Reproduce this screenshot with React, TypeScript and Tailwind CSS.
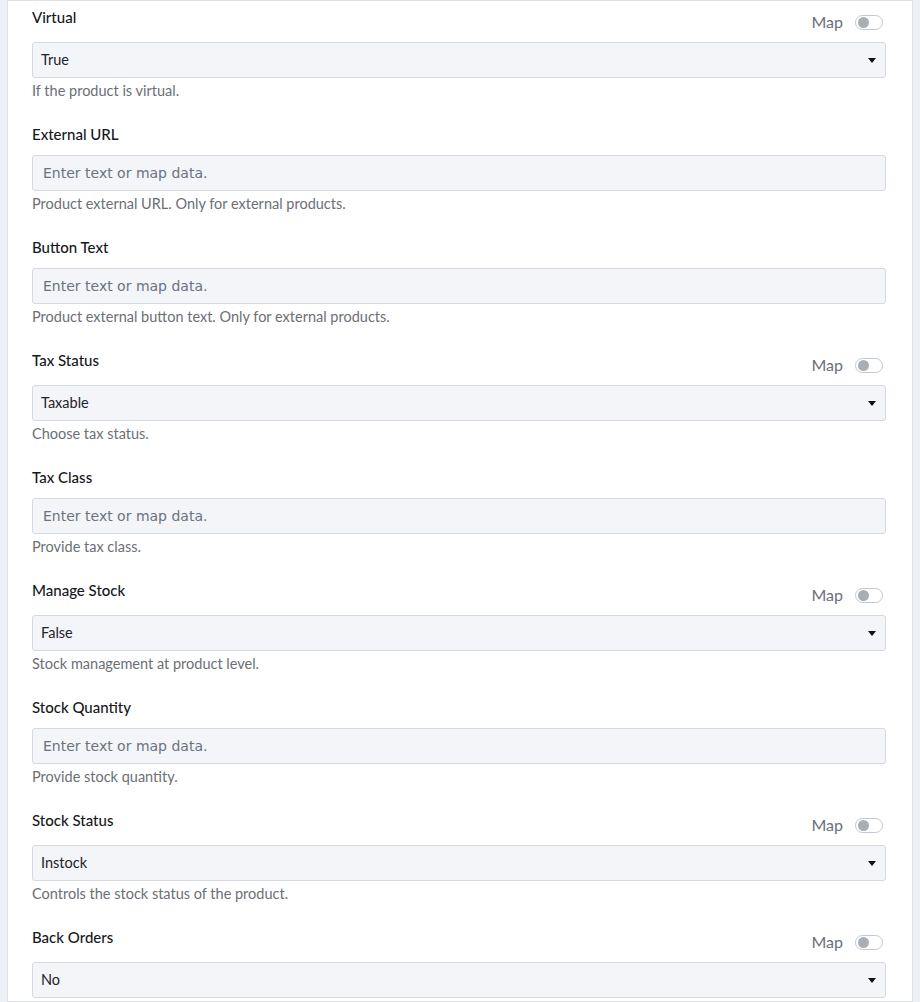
import type { ReactNode } from "react";

type Field =
	| { kind: "select"; label: string; value: string; help?: string; map: boolean }
	| { kind: "text"; label: string; help?: string };

const fields: Field[] = [
	{ kind: "select", label: "Virtual", value: "True", help: "If the product is virtual.", map: true },
	{ kind: "text", label: "External URL", help: "Product external URL. Only for external products." },
	{ kind: "text", label: "Button Text", help: "Product external button text. Only for external products." },
	{ kind: "select", label: "Tax Status", value: "Taxable", help: "Choose tax status.", map: true },
	{ kind: "text", label: "Tax Class", help: "Provide tax class." },
	{ kind: "select", label: "Manage Stock", value: "False", help: "Stock management at product level.", map: true },
	{ kind: "text", label: "Stock Quantity", help: "Provide stock quantity." },
	{ kind: "select", label: "Stock Status", value: "Instock", help: "Controls the stock status of the product.", map: true },
	{ kind: "select", label: "Back Orders", value: "No", map: true },
];

function MapToggle() {
	return (
		<div className="mt-[6px] mr-[3px] flex h-5 items-center gap-3">
			<span className="text-[16px] text-[#6b7078]">Map</span>
			<span className="flex h-[15px] w-[28px] items-center rounded-full border border-[#c3c7ce] bg-white px-[2px]">
				<span className="h-[11px] w-[11px] rounded-full bg-[#a9adb4]" />
			</span>
		</div>
	);
}

function FieldBlock({ field }: { field: Field }) {
	let control: ReactNode;
	if (field.kind === "select") {
		control = (
			<div className="flex h-9 items-center justify-between rounded-[3px] border border-[#d5d9e0] bg-[#f3f5f9] pl-2 pr-[9px] text-[14.5px] text-[#1f2328]">
				<span>{field.value}</span>
				<svg width="8" height="5" viewBox="0 0 8 5" className="fill-[#111]">
					<path d="M0 0h8L4 5z" />
				</svg>
			</div>
		);
	} else {
		control = (
			<input
				type="text"
				placeholder="Enter text or map data."
				className="block h-9 w-full rounded-[3px] border border-[#d5d9e0] bg-[#f3f5f9] px-[10px] font-['DejaVu_Sans',sans-serif] text-[14px] text-[#1f2328] outline-none placeholder:text-[#6b7280]"
			/>
		);
	}

	return (
		<div>
			<div className="mb-[10px] flex items-start justify-between">
				<label className="text-[15px] font-medium leading-[22px] text-[#16181c]">{field.label}</label>
				{field.kind === "select" && field.map && <MapToggle />}
			</div>
			{control}
			{field.help && <p className="mt-[3px] text-[14.5px] leading-5 text-[#6b6f76]">{field.help}</p>}
		</div>
	);
}

export default function App() {
	return (
		<div className="h-[1002px] overflow-hidden bg-[#eef0f7] px-[7px] font-['Lato',sans-serif]">
			<div className="min-h-full border border-[#dfe2ea] bg-white pt-[5px] pl-[24px] pr-[26px]">
				<div className="flex flex-col gap-[22px]">
					{fields.map((f) => (
						<FieldBlock key={f.label} field={f} />
					))}
				</div>
			</div>
		</div>
	);
}
